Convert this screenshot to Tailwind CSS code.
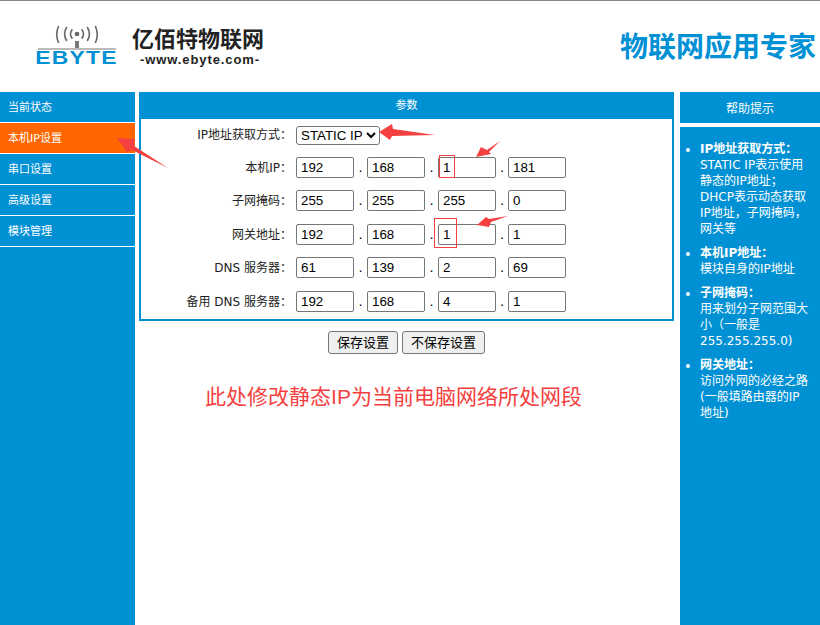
<!DOCTYPE html>
<html lang="zh-CN">
<head>
  <meta charset="UTF-8" />
  <title>物联网应用专家</title>
  <script src="https://cdn.jsdelivr.net/npm/@tailwindcss/browser@4"></script>
</head>
<body class="bg-white w-[820px] h-[625px] overflow-hidden relative font-['DejaVu_Sans','Noto_Sans_CJK_SC',sans-serif] text-[12px] text-[#222]">
  <!-- header -->
  <header class="h-[92px] border-t border-[#888] flex justify-between relative">
    <div class="flex items-start pl-[37px] pt-[23px] font-['Liberation_Sans','Noto_Sans_CJK_SC',sans-serif]">
      <div class="w-[80px] flex flex-col items-center">
        <svg width="44" height="24" viewBox="0 0 44 24" fill="none" stroke="#666" stroke-width="1.6">
          <path d="M3.700 2 A20 20 0 0 0 3.700 19" />
          <path d="M11.800 3 A13 13 0 0 0 11.800 17" />
          <path d="M17.400 5.400 A6.500 6.500 0 0 0 17.400 14.600" />
          <path d="M40.300 2 A20 20 0 0 1 40.300 19" />
          <path d="M32.200 3 A13 13 0 0 1 32.200 17" />
          <path d="M26.600 5.400 A6.500 6.500 0 0 1 26.600 14.600" />
          <circle cx="22" cy="10" r="2.300" fill="#666" stroke="none" />
          <path d="M20 17h4v7h-4z" fill="#777" stroke="none" />
        </svg>
        <div class="w-[78px] h-[2px] bg-[#bbb]"></div>
        <div class="text-[#0090d4] text-[18px] leading-[15px] mt-[1px] font-bold tracking-[1px] scale-x-[1.27]">EBYTE</div>
      </div>
      <div class="ml-[15px] flex flex-col items-center pt-[3px]">
        <div class="text-[22px] leading-[26px] font-bold text-[#222]">亿佰特物联网</div>
        <div class="text-[13px] leading-[14px] font-bold tracking-[0.9px] text-[#222] pl-[4px]">-www.ebyte.com-</div>
      </div>
    </div>
    <div class="text-[28px] leading-[34px] font-bold text-[#0090d4] pr-[4px] pt-[30px] font-['Liberation_Sans','Noto_Sans_CJK_SC',sans-serif]">物联网应用专家</div>
  </header>

  <div class="flex h-[533px]">
    <!-- left nav -->
    <nav class="w-[135px] bg-[#0090d4] text-white shrink-0 text-[11px]">
      <div class="h-[30px] flex items-center pl-[8px] pt-[2px]">当前状态</div>
      <div class="h-[1px] bg-white"></div>
      <div class="h-[30px] bg-[#ff6600] flex items-center pl-[8px] pt-[2px]">本机IP设置</div>
      <div class="h-[1px] bg-white"></div>
      <div class="h-[30px] flex items-center pl-[8px] pt-[2px]">串口设置</div>
      <div class="h-[1px] bg-white"></div>
      <div class="h-[30px] flex items-center pl-[8px] pt-[2px]">高级设置</div>
      <div class="h-[1px] bg-white"></div>
      <div class="h-[30px] flex items-center pl-[8px] pt-[2px]">模块管理</div>
      <div class="h-[1px] bg-white"></div>
    </nav>

    <!-- main -->
    <main class="w-[535px] ml-[4px] shrink-0">
      <div class="h-[27px] bg-[#0090d4] text-white text-[11px] flex items-center justify-center pt-[2px]">参数</div>
      <div class="h-[202px] border-2 border-t-0 border-[#0090d4] pt-[6px]">
        <div class="flex items-center h-[20px]">
          <div class="w-[155px] pr-[4px] text-right">IP地址获取方式：</div>
          <select class="w-[84px] h-[19px] border border-[#767676] rounded-[3px] font-['Liberation_Sans'] text-[13.33px] leading-[16px] text-black bg-white">
            <option>STATIC IP</option>
          </select>
        </div>
        <div class="flex items-center h-[21px] mt-[12px]">
          <div class="w-[155px] pr-[4px] text-right">本机IP：</div>
          <input class="w-[58px] h-[21px] border border-[#767676] rounded-[2px] px-[4px] font-['Liberation_Sans'] text-[13.33px] text-black" value="192" />
          <span class="w-[13px] text-center text-[13px] text-black">.</span>
          <input class="w-[58px] h-[21px] border border-[#767676] rounded-[2px] px-[4px] font-['Liberation_Sans'] text-[13.33px] text-black" value="168" />
          <span class="w-[13px] text-center text-[13px] text-black">.</span>
          <input class="w-[58px] h-[21px] border border-[#767676] rounded-[2px] px-[4px] font-['Liberation_Sans'] text-[13.33px] text-black" value="1" />
          <span class="w-[12px] text-center text-[13px] text-black">.</span>
          <input class="w-[58px] h-[21px] border border-[#767676] rounded-[2px] px-[4px] font-['Liberation_Sans'] text-[13.33px] text-black" value="181" />
        </div>
        <div class="flex items-center h-[21px] mt-[12px]">
          <div class="w-[155px] pr-[4px] text-right">子网掩码：</div>
          <input class="w-[58px] h-[21px] border border-[#767676] rounded-[2px] px-[4px] font-['Liberation_Sans'] text-[13.33px] text-black" value="255" />
          <span class="w-[13px] text-center text-[13px] text-black">.</span>
          <input class="w-[58px] h-[21px] border border-[#767676] rounded-[2px] px-[4px] font-['Liberation_Sans'] text-[13.33px] text-black" value="255" />
          <span class="w-[13px] text-center text-[13px] text-black">.</span>
          <input class="w-[58px] h-[21px] border border-[#767676] rounded-[2px] px-[4px] font-['Liberation_Sans'] text-[13.33px] text-black" value="255" />
          <span class="w-[12px] text-center text-[13px] text-black">.</span>
          <input class="w-[58px] h-[21px] border border-[#767676] rounded-[2px] px-[4px] font-['Liberation_Sans'] text-[13.33px] text-black" value="0" />
        </div>
        <div class="flex items-center h-[21px] mt-[13px]">
          <div class="w-[155px] pr-[4px] text-right">网关地址：</div>
          <input class="w-[58px] h-[21px] border border-[#767676] rounded-[2px] px-[4px] font-['Liberation_Sans'] text-[13.33px] text-black" value="192" />
          <span class="w-[13px] text-center text-[13px] text-black">.</span>
          <input class="w-[58px] h-[21px] border border-[#767676] rounded-[2px] px-[4px] font-['Liberation_Sans'] text-[13.33px] text-black" value="168" />
          <span class="w-[13px] text-center text-[13px] text-black">.</span>
          <input class="w-[58px] h-[21px] border border-[#767676] rounded-[2px] px-[4px] font-['Liberation_Sans'] text-[13.33px] text-black" value="1" />
          <span class="w-[12px] text-center text-[13px] text-black">.</span>
          <input class="w-[58px] h-[21px] border border-[#767676] rounded-[2px] px-[4px] font-['Liberation_Sans'] text-[13.33px] text-black" value="1" />
        </div>
        <div class="flex items-center h-[21px] mt-[12px]">
          <div class="w-[155px] pr-[4px] text-right">DNS 服务器：</div>
          <input class="w-[58px] h-[21px] border border-[#767676] rounded-[2px] px-[4px] font-['Liberation_Sans'] text-[13.33px] text-black" value="61" />
          <span class="w-[13px] text-center text-[13px] text-black">.</span>
          <input class="w-[58px] h-[21px] border border-[#767676] rounded-[2px] px-[4px] font-['Liberation_Sans'] text-[13.33px] text-black" value="139" />
          <span class="w-[13px] text-center text-[13px] text-black">.</span>
          <input class="w-[58px] h-[21px] border border-[#767676] rounded-[2px] px-[4px] font-['Liberation_Sans'] text-[13.33px] text-black" value="2" />
          <span class="w-[12px] text-center text-[13px] text-black">.</span>
          <input class="w-[58px] h-[21px] border border-[#767676] rounded-[2px] px-[4px] font-['Liberation_Sans'] text-[13.33px] text-black" value="69" />
        </div>
        <div class="flex items-center h-[21px] mt-[13px]">
          <div class="w-[155px] pr-[4px] text-right">备用 DNS 服务器：</div>
          <input class="w-[58px] h-[21px] border border-[#767676] rounded-[2px] px-[4px] font-['Liberation_Sans'] text-[13.33px] text-black" value="192" />
          <span class="w-[13px] text-center text-[13px] text-black">.</span>
          <input class="w-[58px] h-[21px] border border-[#767676] rounded-[2px] px-[4px] font-['Liberation_Sans'] text-[13.33px] text-black" value="168" />
          <span class="w-[13px] text-center text-[13px] text-black">.</span>
          <input class="w-[58px] h-[21px] border border-[#767676] rounded-[2px] px-[4px] font-['Liberation_Sans'] text-[13.33px] text-black" value="4" />
          <span class="w-[12px] text-center text-[13px] text-black">.</span>
          <input class="w-[58px] h-[21px] border border-[#767676] rounded-[2px] px-[4px] font-['Liberation_Sans'] text-[13.33px] text-black" value="1" />
        </div>
      </div>
      <div class="flex justify-center gap-[4px] mt-[10px]">
        <button class="h-[23px] px-[8px] border border-[#767676] rounded-[3px] bg-[#efefef] text-[13px] text-black font-['Liberation_Sans','Noto_Sans_CJK_SC']">保存设置</button>
        <button class="h-[23px] px-[8px] border border-[#767676] rounded-[3px] bg-[#efefef] text-[13px] text-black font-['Liberation_Sans','Noto_Sans_CJK_SC']">不保存设置</button>
      </div>
      <p class="text-center text-[21px] leading-[30px] text-[#f44040] mt-[28px] pr-[26px] font-['Liberation_Sans','Noto_Sans_CJK_SC',sans-serif]">此处修改静态IP为当前电脑网络所处网段</p>
    </main>

    <!-- help -->
    <aside class="w-[140px] ml-[6px] shrink-0 text-white flex flex-col">
      <div class="h-[31px] bg-[#0090d4] flex items-center justify-center pt-[2px]">帮助提示</div>
      <div class="flex-1 mt-[4px] bg-[#0090d4] pt-[14px] pl-[20px] pr-[9px]">
        <ul class="list-disc leading-[16px] flex flex-col gap-[8px]">
          <li><b>IP地址获取方式：</b><br />STATIC IP表示使用静态的IP地址；<br />DHCP表示动态获取IP地址，子网掩码，网关等</li>
          <li><b>本机IP地址：</b><br />模块自身的IP地址</li>
          <li><b>子网掩码：</b><br />用来划分子网范围大小（一般是255.255.255.0)</li>
          <li><b>网关地址：</b><br />访问外网的必经之路(一般填路由器的IP地址)</li>
        </ul>
      </div>
    </aside>
  </div>

  <!-- screenshot annotations -->
  <svg class="absolute left-0 top-0 pointer-events-none" width="820" height="625" fill="#f44040">
    <path d="M117 138 L135 139 L134 146 L168 168 L132 150 L127 152 Z" />
    <path d="M379 132 L392 124 L393 129 L435 135 L392 136 L390 140 Z" />
    <path d="M476 157 L481 147 L487 150 L500 141 L489 152 L491 154 Z" />
    <path d="M477 225 L486 217 L489 219 L508 216 L491 222 L489 227 Z" />
    <rect x="439.500" y="155.500" width="15" height="22" fill="none" stroke="#f44040" />
    <rect x="434.500" y="218.500" width="22" height="29" fill="none" stroke="#f44040" />
  </svg>
</body>
</html>
